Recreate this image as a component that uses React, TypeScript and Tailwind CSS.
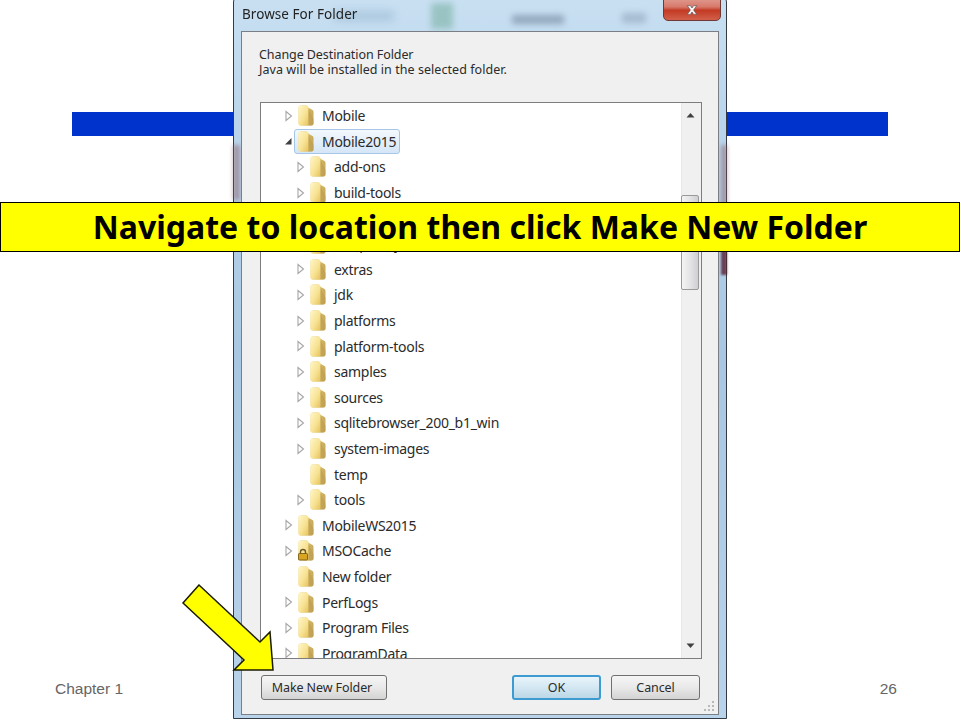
import React from "react";

const SANS = "font-['Noto_Sans','Open_Sans',sans-serif]";

function Folder({ lock }: { lock?: boolean }) {
  return (
    <svg width="16" height="21" viewBox="0 0 16 21" className="shrink-0">
      <defs>
        <linearGradient id="fb" x1="0" y1="0" x2="1" y2="0">
          <stop offset="0" stopColor="#ecd382" />
          <stop offset="1" stopColor="#c6a95a" />
        </linearGradient>
        <linearGradient id="ff" x1="0" y1="0" x2="1" y2="1">
          <stop offset="0" stopColor="#fff6c8" />
          <stop offset="0.55" stopColor="#f8e394" />
          <stop offset="1" stopColor="#e6c25e" />
        </linearGradient>
      </defs>
      <path d="M0.500 2.500 Q0.500 0.500 2.500 0.500 L8 0.500 Q10 0.500 10 2.500 L14.500 5 Q15.500 5.500 15.500 7 L15.500 18.500 Q15.500 20.500 13.500 20.500 L2.500 20.500 Q0.500 20.500 0.500 18.500 Z" fill="url(#fb)" />
      <path d="M0.500 2.500 Q0.500 0.500 2.500 0.500 L8.500 0.500 Q10.500 0.500 10.500 2.500 L10.500 19.500 Q10.500 20.500 9.500 20.500 L2.500 20.500 Q0.500 20.500 0.500 18.500 Z" fill="url(#ff)" />
      <path d="M10.500 4 L15.500 14 L15.500 18.500 Q15.500 20.500 13.500 20.500 L9.500 20.500 Q10.500 20.500 10.500 19.500 Z" fill="#bd9c50" opacity="0.65" />
      {lock && (
        <g>
          <path d="M2.500 14 L2.500 12 Q2.500 9.500 5 9.500 Q7.500 9.500 7.500 12 L7.500 14" fill="none" stroke="#6b5a2a" strokeWidth="1.400" />
          <rect x="0.500" y="13.500" width="9" height="6.500" rx="0.800" fill="#d9a520" stroke="#6b4f10" strokeWidth="0.800" />
        </g>
      )}
    </svg>
  );
}

type Row = { name: string; level: number; arrow?: "closed" | "open" | "none"; selected?: boolean; lock?: boolean };

const rows: Row[] = [
  { name: "Mobile", level: 0 },
  { name: "Mobile2015", level: 0, arrow: "open", selected: true },
  { name: "add-ons", level: 1 },
  { name: "build-tools", level: 1 },
  { name: "cache", level: 1 },
  { name: "temporary", level: 1 },
  { name: "extras", level: 1 },
  { name: "jdk", level: 1 },
  { name: "platforms", level: 1 },
  { name: "platform-tools", level: 1 },
  { name: "samples", level: 1 },
  { name: "sources", level: 1 },
  { name: "sqlitebrowser_200_b1_win", level: 1 },
  { name: "system-images", level: 1 },
  { name: "temp", level: 1, arrow: "none" },
  { name: "tools", level: 1 },
  { name: "MobileWS2015", level: 0 },
  { name: "MSOCache", level: 0, lock: true },
  { name: "New folder", level: 0, arrow: "none" },
  { name: "PerfLogs", level: 0 },
  { name: "Program Files", level: 0 },
  { name: "ProgramData", level: 0 },
];

function Arrow({ kind }: { kind: "closed" | "open" | "none" }) {
  return (
    <span className="w-[14px] shrink-0 flex items-center justify-start">
      {kind === "closed" && (
        <svg width="9" height="12" viewBox="0 0 9 12">
          <path d="M2 1.500 L7.500 6 L2 10.500 Z" fill="#ffffff" stroke="#a6a6a6" strokeWidth="1.100" />
        </svg>
      )}
      {kind === "open" && (
        <svg width="9" height="12" viewBox="0 0 9 12">
          <path d="M1 9.500 L7.500 9.500 L7.500 3 Z" fill="#404040" />
        </svg>
      )}
    </span>
  );
}

function TreeRow({ row }: { row: Row }) {
  return (
    <div className={`relative flex items-center h-[25.6px] shrink-0 ${row.level === 0 ? "pl-[23px]" : "pl-[35px]"}`}>
      <Arrow kind={row.arrow ?? "closed"} />
      {row.selected ? (
        <div className="flex items-center h-[25px] -ml-[4px] pl-[3px] pr-[3px] rounded-[3px] border border-[#a5c6e6] bg-[linear-gradient(#f3f8fd,#d5e6f7)]">
          <Folder />
          <span className="ml-[8px] text-[14px] text-[#2b2b2b] tracking-[-0.28px]">{row.name}</span>
        </div>
      ) : (
        <>
          <Folder lock={row.lock} />
          <span className="ml-[8px] text-[14px] text-[#2b2b2b] tracking-[-0.28px] whitespace-nowrap">{row.name}</span>
        </>
      )}
    </div>
  );
}

function Button({ children, width, primary, className }: { children: React.ReactNode; width: string; primary?: boolean; className?: string }) {
  const look = primary
    ? "border-2 border-[#3d9bd1] bg-[linear-gradient(#e9f4fa,#d3e7f2_50%,#bcd7e6)]"
    : "border border-[#707070] bg-[linear-gradient(#f5f5f5,#e9e9e9_50%,#d3d3d3)]";
  return (
    <div className={`${width} h-[25px] rounded-[3px] flex items-center justify-center pt-[2px] text-[12.5px] tracking-[-0.1px] text-[#2b2b2b] ${look} ${className ?? ""}`}>
      {children}
    </div>
  );
}

export default function App() {
  return (
    <div className="relative w-[960px] h-[720px] overflow-hidden bg-white flex flex-col font-['Liberation_Sans',sans-serif]">
      <div className="mt-[112px] mx-[72px] h-6 bg-[#0033cc]" />
      <div className="mt-auto mb-[20px] pl-[55px] pr-[63px] flex justify-between text-[15.5px] text-[#666666]">
        <span>Chapter 1</span>
        <span>26</span>
      </div>

      {/* dialog window */}
      <div className={`absolute left-[233px] top-[-6px] w-[494px] h-[725px] rounded-t-lg border border-[#333a44] bg-[linear-gradient(#c9e0f2,#bcd6ec_15%,#a9c7e2_50%,#b8d3ea_100%)] blur-[0.35px] ${SANS}`}>
        {/* desktop showing through the glass */}
        <div className="absolute left-[197px] top-[8px] w-[22px] h-[26px] bg-[#86b9b0] opacity-70 blur-[3px]" />
        <div className="absolute left-[278px] top-[20px] w-[52px] h-[9px] bg-[#71859b] opacity-60 blur-[3px]" />
        <div className="absolute left-[388px] top-[18px] w-[24px] h-[10px] bg-[#8fa6bc] opacity-60 blur-[3px]" />
        <div className="absolute left-[100px] top-[16px] w-[60px] h-[10px] bg-[#9ab8d2] opacity-60 blur-[4px]" />
        <div className="absolute left-[-1px] top-[150px] w-[7px] h-[55px] bg-[#8c5a60] opacity-50 blur-[2px]" />
        <div className="absolute right-[-1px] top-[150px] w-[6px] h-[60px] bg-[#8c5a60] opacity-50 blur-[2px]" />
        <div className="absolute right-[-1px] top-[250px] w-[6px] h-[30px] bg-[#5a1f30] opacity-80 blur-[1px]" />

        <div className="relative h-[36px] pt-[10px] pl-[8px] text-[13.5px] leading-[18px] tracking-[0.05px] text-[#222222]">Browse For Folder</div>

        {/* close button */}
        <div className="absolute left-[429px] top-0 w-[58px] h-[26px] rounded-b-[5px] border border-[#6e3a38] bg-[linear-gradient(#e2a49a,#d77a6c_45%,#c33a24_60%,#d2604a)] flex items-center justify-center pt-[3px]">
          <svg width="16" height="12" viewBox="0 0 20 15">
            <path d="M4 2 L8 2 L10 5 L12 2 L16 2 L12 7.500 L16 13 L12 13 L10 10 L8 13 L4 13 L8 7.500 Z" fill="#f4f4f4" stroke="#5a4a4a" strokeWidth="0.800" />
          </svg>
        </div>

        {/* client area */}
        <div className="relative mx-[7px] h-[684px] border border-[#7a7f85] bg-[#f0f0f0] pl-[17px] pr-[18px] flex flex-col">
          <div className="pt-[15px] h-[70px] text-[12.5px] leading-[15px] text-[#2b2b2b]">
            <div className="tracking-[-0.08px]">Change Destination Folder</div>
            <div className="tracking-[0.05px]">Java will be installed in the selected folder.</div>
          </div>
          <div className="ml-px w-[442px] h-[557px] border border-[#7d7d7d] bg-white flex overflow-hidden">
            <div className="flex-1 flex flex-col overflow-hidden">
              {rows.map((r) => (
                <TreeRow key={r.name} row={r} />
              ))}
            </div>
            <div className="w-[20px] bg-[#f0f0f0] border-l border-[#e8e8e8] flex flex-col">
              <svg width="9" height="6" viewBox="0 0 9 6" className="mt-[9px] ml-[4px] shrink-0">
                <path d="M0.500 5.500 L4.500 1 L8.500 5.500 Z" fill="#404040" />
              </svg>
              <div className="mt-[77px] -ml-px w-[18px] h-[95px] rounded-[2px] border border-[#9a9a9a] bg-[linear-gradient(90deg,#f4f4f4,#e4e4e6_50%,#cfcfd3)]" />
              <svg width="9" height="6" viewBox="0 0 9 6" className="mt-auto mb-[9px] ml-[4px] shrink-0">
                <path d="M0.500 0.500 L4.500 5 L8.500 0.500 Z" fill="#404040" />
              </svg>
            </div>
          </div>
          <div className="mt-[16px] ml-[2px] flex items-start">
            <Button width="w-[126px]" className="pr-[4px]">Make New Folder</Button>
            <div className="ml-auto flex gap-[10px]">
              <Button width="w-[89px]" primary>OK</Button>
              <Button width="w-[89px]">Cancel</Button>
            </div>
          </div>
          <svg width="11" height="11" viewBox="0 0 11 11" className="absolute right-[3px] bottom-[2px]" fill="#b8b8b8">
            <rect x="8" y="0" width="2" height="2" />
            <rect x="4" y="4" width="2" height="2" />
            <rect x="8" y="4" width="2" height="2" />
            <rect x="0" y="8" width="2" height="2" />
            <rect x="4" y="8" width="2" height="2" />
            <rect x="8" y="8" width="2" height="2" />
          </svg>
        </div>
      </div>

      {/* callout banner */}
      <div className="absolute left-0 right-0 top-[202px] h-[50px] border border-black bg-[#ffff00] flex items-center justify-center text-[32px] font-bold text-black font-['Noto_Sans',sans-serif]">
        Navigate to location then click Make New Folder
      </div>

      {/* pointer arrow */}
      <svg width="100" height="96" viewBox="0 0 100 96" className="absolute left-[180px] top-[582px]">
        <path d="M19 3 L3 21 L64 78 L54 88 L93 88 L90 50 L80 60 Z" fill="#ffff00" stroke="#1a1a00" strokeWidth="1.500" />
      </svg>
    </div>
  );
}
